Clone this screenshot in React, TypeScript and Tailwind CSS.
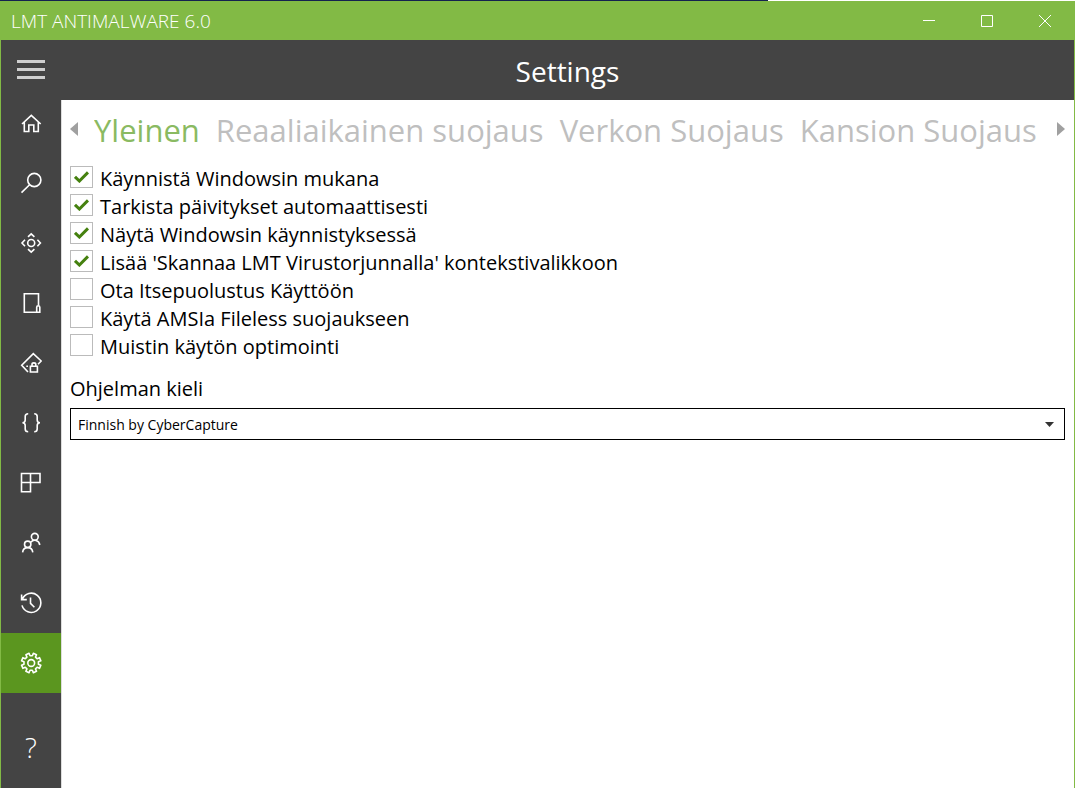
import React, { useState } from 'react';

const iconProps = {
  width: 22,
  height: 22,
  viewBox: '0 0 22 22',
  fill: 'none',
  stroke: 'currentColor',
  strokeWidth: 1.6,
  'aria-hidden': true,
};

// closed outline of a cog wheel, one flat tooth per step
function gearPath(cx: number, cy: number, outer: number, inner: number, teeth: number) {
  const points: string[] = [];
  const step = (Math.PI * 2) / teeth;
  for (let i = 0; i < teeth; i++) {
    const mid = i * step + step / 2;
    [
      [mid - step * 0.3, inner],
      [mid - step * 0.22, outer],
      [mid + step * 0.22, outer],
      [mid + step * 0.3, inner],
    ].forEach(([a, r]) => {
      points.push(`${(cx + Math.cos(a) * r).toFixed(2)} ${(cy + Math.sin(a) * r).toFixed(2)}`);
    });
  }
  return `M${points.join('L')}Z`;
}

const navItems = [
  {
    label: 'Home',
    icon: (
      <svg {...iconProps}>
        <path d="M2 12 11.3 3.3 20.7 12M4.3 10.2V19.5H8.8V13H13.8V19.5H18.3V10.2" />
      </svg>
    ),
  },
  {
    label: 'Scan',
    icon: (
      <svg {...iconProps}>
        <circle cx="14.3" cy="8" r="6.6" />
        <path d="M9.6 12.7 1.5 20.6" />
      </svg>
    ),
  },
  {
    label: 'Real-time protection',
    icon: (
      <svg {...iconProps}>
        <circle cx="11.2" cy="11" r="3.5" />
        <path d="M8 4.8 11.2 1.8 14.4 4.8M8 17.2 11.2 20.2 14.4 17.2M5 7.8 2 11 5 14.2M17.4 7.8 20.4 11 17.4 14.2" />
      </svg>
    ),
  },
  {
    label: 'Device',
    icon: (
      <svg {...iconProps}>
        <path d="M16 20.3H4.3V1.7H18.5V13" />
        <path d="M16.7 20.3V15.2C16.7 13.2 19.8 13.2 19.8 15.2V20.3Z" />
      </svg>
    ),
  },
  {
    label: 'Privacy',
    icon: (
      <svg {...iconProps}>
        <path d="M8 20 1.7 13.2 13.3 1.7 21.2 9 18 12.2M6.3 14.2H8" />
        <path d="M10.4 14.3H17.4V20H10.4ZM12 14.3V12.4C12 10.4 15.8 10.4 15.8 12.4V14.3" />
      </svg>
    ),
  },
  {
    label: 'Scripts',
    icon: (
      <svg {...iconProps}>
        <path d="M8.2 1.8C5.6 1.8 5.2 2.8 5.2 4.6V8C5.2 9.8 4.4 10.8 2.4 10.8 4.4 10.8 5.2 11.8 5.2 13.6V17C5.2 18.8 5.6 19.8 8.2 19.8" />
        <path d="M14.2 1.8C16.8 1.8 17.2 2.8 17.2 4.6V8C17.2 9.8 18 10.8 20 10.8 18 10.8 17.2 11.8 17.2 13.6V17C17.2 18.8 16.8 19.8 14.2 19.8" />
      </svg>
    ),
  },
  {
    label: 'Tools',
    icon: (
      <svg {...iconProps}>
        <path d="M1.5 1.5H20V10.5H1.5ZM10.5 1.5V19.7H1.5V1.5" />
      </svg>
    ),
  },
  {
    label: 'Users',
    icon: (
      <svg {...iconProps}>
        <circle cx="7.7" cy="12.3" r="3.2" />
        <circle cx="14.8" cy="4.8" r="3.4" />
        <path d="M2.6 20.3C3.4 14 12 14 12.8 20.3M10.8 10.2C13.6 6.8 19 8 19.8 13" />
      </svg>
    ),
  },
  {
    label: 'History',
    icon: (
      <svg {...iconProps}>
        <path d="M2.3 7.3A9.6 9.6 0 1 1 2 13.4M1.6 2.5V7.6H6.8M10.5 5.5V11.3L14.4 15.2" />
      </svg>
    ),
  },
  {
    label: 'Settings',
    icon: (
      <svg {...iconProps}>
        <path strokeLinejoin="round" d={gearPath(11.2, 11, 9.9, 7.3, 8)} />
        <circle cx="11.2" cy="11" r="3.4" />
      </svg>
    ),
  },
];

const tabs = ['Yleinen', 'Reaaliaikainen suojaus', 'Verkon Suojaus', 'Kansion Suojaus'];

const initialOptions = [
  { id: 'startup', label: 'Käynnistä Windowsin mukana', checked: true },
  { id: 'updates', label: 'Tarkista päivitykset automaattisesti', checked: true },
  { id: 'show', label: 'Näytä Windowsin käynnistyksessä', checked: true },
  { id: 'context', label: "Lisää 'Skannaa LMT Virustorjunnalla' kontekstivalikkoon", checked: true },
  { id: 'self', label: 'Ota Itsepuolustus Käyttöön', checked: false },
  { id: 'amsi', label: 'Käytä AMSIa Fileless suojaukseen', checked: false },
  { id: 'memory', label: 'Muistin käytön optimointi', checked: false },
];

function TitleBar() {
  return (
    <div className="flex h-[39px] items-center justify-between bg-[#82ba45] pr-px pl-[11px] text-white">
      <span className="pt-[2px] text-[19px] font-light">LMT ANTIMALWARE 6.0</span>
      <div className="flex h-full">
        <button type="button" aria-label="Minimize" className="flex w-[58px] items-center justify-center">
          <svg width="12" height="12" viewBox="0 0 12 12" fill="none" stroke="currentColor">
            <path d="M0 5.5H12" />
          </svg>
        </button>
        <button type="button" aria-label="Maximize" className="flex w-[58px] items-center justify-center">
          <svg width="12" height="12" viewBox="0 0 12 12" fill="none" stroke="currentColor">
            <path d="M.5 .5H11.5V11.5H.5Z" />
          </svg>
        </button>
        <button type="button" aria-label="Close" className="flex w-[58px] items-center justify-center">
          <svg width="12" height="12" viewBox="0 0 12 12" fill="none" stroke="currentColor">
            <path d="M0 0 12 12M12 0 0 12" />
          </svg>
        </button>
      </div>
    </div>
  );
}

function Sidebar({ active, onSelect }: { active: string; onSelect: (label: string) => void }) {
  return (
    <nav className="flex w-[60px] shrink-0 flex-col bg-[#444444] pb-[10px] text-white">
      <button type="button" aria-label="Menu" className="flex h-[53px] items-end justify-center pb-[13px]">
        <svg width="28" height="20" viewBox="0 0 28 20" fill="#cfcfcf" aria-hidden="true">
          <path d="M0 0H28V3H0ZM0 8H28V11H0ZM0 16H28V19H0Z" />
        </svg>
      </button>
      {navItems.map((item) => (
        <button
          key={item.label}
          type="button"
          aria-label={item.label}
          onClick={() => onSelect(item.label)}
          className={`flex h-[60px] shrink-0 items-center justify-center ${active === item.label ? 'bg-[#5b961f]' : ''}`}
        >
          {item.icon}
        </button>
      ))}
      <button
        type="button"
        aria-label="Help"
        className="mt-auto flex h-[60px] items-center justify-center pb-[2px] text-[28px] font-light"
      >
        ?
      </button>
    </nav>
  );
}

export default function App() {
  const [active, setActive] = useState('Settings');
  const [tab, setTab] = useState(tabs[0]);
  const [options, setOptions] = useState(initialOptions);

  const toggle = (id: string) => {
    setOptions(options.map((o) => (o.id === id ? { ...o, checked: !o.checked } : o)));
  };

  return (
    <div className="flex min-h-screen flex-col bg-white font-['Open_Sans','Noto_Sans',sans-serif] text-black">
      <div className="flex h-px">
        <div className="w-[71.4%] bg-[#14214f]" />
      </div>
      <TitleBar />
      <div className="flex grow border-x border-[#82ba45]">
        <Sidebar active={active} onSelect={setActive} />
        <div className="flex min-w-0 grow flex-col">
          <header className="flex h-[60px] items-center justify-center bg-[#444444]">
            <h1 className="pt-[2px] text-[28px] leading-[36px] text-white">Settings</h1>
          </header>
          <main className="grow border-l border-[#dddddd] pr-[9px] pl-2">
            <div className="flex h-[65px] items-center pb-[6px]">
              <button type="button" aria-label="Previous tab" className="w-6 shrink-0 pb-[2px]">
                <svg width="8" height="14" viewBox="0 0 8 14" fill="#a0a0a0">
                  <path d="M8 0V14L0 7Z" />
                </svg>
              </button>
              <div role="tablist" className="flex min-w-0 grow gap-4 overflow-hidden whitespace-nowrap">
                {tabs.map((t) => (
                  <button
                    key={t}
                    type="button"
                    role="tab"
                    aria-selected={tab === t}
                    onClick={() => setTab(t)}
                    className={`text-[31px] leading-[44px] ${tab === t ? 'text-[#8aba62]' : 'text-[#bfbfbf]'}`}
                  >
                    {t}
                  </button>
                ))}
              </div>
              <button type="button" aria-label="Next tab" className="flex w-6 shrink-0 justify-end pb-[2px]">
                <svg width="8" height="14" viewBox="0 0 8 14" fill="#a0a0a0">
                  <path d="M0 0V14L8 7Z" />
                </svg>
              </button>
            </div>

            <div className="flex flex-col">
              {options.map((o) => (
                <label key={o.id} className="flex h-7 items-start gap-[7px]">
                  <span className="mt-px grid shrink-0 place-items-center">
                    <input
                      type="checkbox"
                      checked={o.checked}
                      onChange={() => toggle(o.id)}
                      className="col-start-1 row-start-1 h-[22px] w-[23px] appearance-none border border-[#bbbbbb] bg-white"
                    />
                    {o.checked ? (
                      <svg
                        className="pointer-events-none col-start-1 row-start-1"
                        width="15"
                        height="12"
                        viewBox="0 0 15 12"
                        fill="none"
                        stroke="#45810f"
                        strokeWidth="3"
                      >
                        <path d="M1 5.8 5.4 10 14 1.4" />
                      </svg>
                    ) : null}
                  </span>
                  <span className="text-[20px] leading-[28px]">{o.label}</span>
                </label>
              ))}
            </div>

            <label htmlFor="language" className="mt-[14px] block text-[20px] leading-[28px]">
              Ohjelman kieli
            </label>
            <div className="mt-[5px] grid items-center">
              <select
                id="language"
                className="col-start-1 row-start-1 h-8 w-full appearance-none border border-black bg-white px-[7px] text-[14px]"
              >
                <option>Finnish by CyberCapture</option>
              </select>
              <svg
                className="pointer-events-none col-start-1 row-start-1 mr-[11px] justify-self-end"
                width="9"
                height="5"
                viewBox="0 0 9 5"
                fill="#333333"
              >
                <path d="M0 0H9L4.5 5Z" />
              </svg>
            </div>
          </main>
        </div>
      </div>
    </div>
  );
}
